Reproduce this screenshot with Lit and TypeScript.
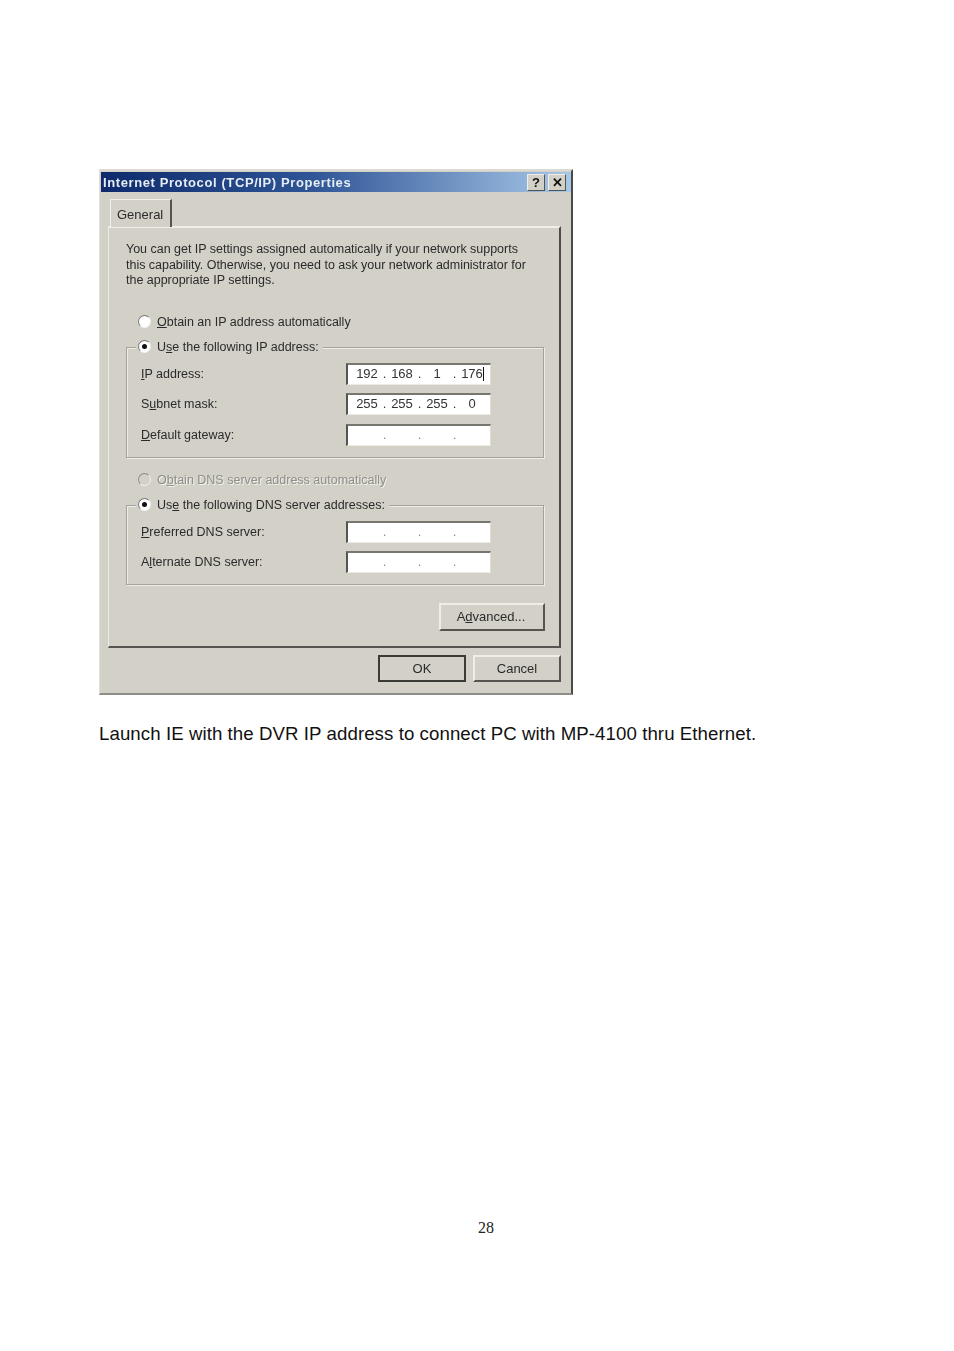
import { LitElement, html, css } from "lit";
import { customElement } from "lit/decorators.js";

const octets = (v: string[]) => html`<div class="ip">
  ${v.map((o, i) => html`<span class="oct">${o}</span>${i < 3 ? html`<span class="dot">.</span>` : ""}`)}
</div>`;

@customElement("app-root")
export class AppRoot extends LitElement {
  static styles = css`
    :host { display: block; width: 954px; height: 1351px; background: #fff; overflow: hidden; }
    .page { padding: 169px 0 0 99px; box-sizing: border-box; height: 1351px; display: flex; flex-direction: column; }
    .dialog { width: 474px; height: 526px; box-sizing: border-box; background: #d3d0c7;
      border-left: 1px solid #e2e0d9; border-top: 2px solid #dcdad2; border-right: 2px solid #4a4a46; border-bottom: 2px solid #8f8e88;
      font: 12.5px "Liberation Sans", Arial, sans-serif; color: #2b2b2b; filter: blur(0.7px); flex: none; }
    .title { height: 20px; margin: 1px 0 0 1px; display: flex; align-items: center; justify-content: space-between;
      background: linear-gradient(90deg, #0e2a6c 0%, #2f5596 45%, #a8c8e8 100%); padding: 0 5px 0 2px; }
    .title b { color: #e6edf4; font-size: 13px; letter-spacing: 0.6px; padding-top: 1px; }
    .winbtns { display: flex; gap: 3px; }
    .winbtn { width: 18px; height: 17px; box-sizing: border-box; background: #d3d0c7; border: 1px solid; border-color: #f0eee8 #55544f #55544f #f0eee8;
      display: flex; align-items: center; justify-content: center; font-weight: bold; font-size: 13px; color: #111; }
    .tabs { height: 27px; margin: 7px 0 0 10px; display: flex; }
    .tab { width: 62px; height: 28px; box-sizing: border-box; border-left: 1px solid #f2f0ea; border-top: 1px solid #f2f0ea; border-right: 2px solid #55544f;
      display: flex; align-items: center; padding: 1px 0 0 6px; font-size: 13px; position: relative; z-index: 1; background: #d3d0c7; }
    .panel { margin-left: 8px; width: 453px; height: 422px; box-sizing: border-box; padding: 14px 17px 0 17px;
      border-top: 2px solid #f0eee6; border-left: 1px solid #ecebe4; border-right: 2px solid #4d4c48; border-bottom: 2px solid #55544f; }
    .para { line-height: 15.5px; margin: 0 0 25px; letter-spacing: -0.02px; }
    .radio-row { display: flex; align-items: center; gap: 6px; height: 16px; padding-left: 12px; white-space: nowrap; }
    .radio { width: 13px; height: 13px; box-sizing: border-box; border-radius: 50%; flex: none; display: flex; align-items: center; justify-content: center;
      border: 1.5px solid; border-color: #777 #eee #f4f4f0 #777; background: #fff; }
    .radio.on::after { content: ""; width: 5px; height: 5px; border-radius: 50%; background: #111; }
    .radio.off { background: #d3d0c7; border-color: #8d8c87 #eee #f4f4f0 #8d8c87; }
    .disabled { color: #8f8e89; text-shadow: 1px 1px 0 #f2f1ec; }
    .first { margin-bottom: 17px; }
    .mid { margin: 14px 0 17px; }
    .group { position: relative; box-sizing: border-box; width: 418px; border: 1px solid #a3a29c; box-shadow: 1px 1px 0 #eeece5, inset 1px 1px 0 #eeece5;
      display: grid; grid-template-columns: 205px 145px; grid-auto-rows: 22px; padding-left: 14px; align-items: center; }
    .g1 { height: 111px; padding-top: 15px; align-content: start; gap: 8.5px 0; }
    .g2 { height: 80px; padding-top: 15px; align-content: start; gap: 8px 0; }
    .legend { position: absolute; top: -9px; left: 9px; background: #d3d0c7; padding-left: 2px; padding-right: 4px; }
    .field { height: 22px; box-sizing: border-box; background: #fff; border-left: 2px solid #55544f; border-top: 2px solid #77766f; border-right: 1px solid #dedcd5; border-bottom: 1px solid #eceae3;
      display: flex; align-items: center; }
    .ip { display: flex; padding: 0 0 2px 7px; font-size: 13px; color: #333; }
    .oct { width: 24px; text-align: center; position: relative; }
    .dot { width: 11px; text-align: center; }
    .empty .dot { color: #8a8a8a; }
    .caret { position: absolute; right: 0; top: 1px; width: 1px; height: 14px; background: #111; }
    .btn { box-sizing: border-box; background: #d3d0c7; display: flex; align-items: center; justify-content: center; font-size: 13px;
      border: 2px solid; border-color: #efede6 #55544f #55544f #efede6; }
    .adv { width: 106px; height: 28px; margin: 18px -3px 0 auto; padding-right: 2px; }
    .foot { display: flex; justify-content: flex-end; gap: 7px; padding: 7px 10px 0 0; }
    .foot .btn { width: 88px; height: 27px; }
    .foot .def { border-color: #3a3a37; }
    .caption { margin: 27px 0 0; font: 18.67px/24px "Liberation Sans", Arial, sans-serif; letter-spacing: 0.07px; color: #111; white-space: nowrap; }
    .pageno { margin: 472px 0 0 379px; font: 16px/20px "Liberation Serif", "Times New Roman", serif; color: #222; }
  `;

  render() {
    return html`<div class="page">
      <div class="dialog">
        <div class="title"><b>Internet Protocol (TCP/IP) Properties</b>
          <div class="winbtns"><span class="winbtn">?</span><span class="winbtn">✕</span></div>
        </div>
        <div class="tabs"><div class="tab">General</div></div>
        <div class="panel">
          <p class="para">You can get IP settings assigned automatically if your network supports<br>
          this capability. Otherwise, you need to ask your network administrator for<br>
          the appropriate IP settings.</p>
          <div class="radio-row first"><span class="radio"></span><span><u>O</u>btain an IP address automatically</span></div>
          <div class="group g1">
            <div class="legend radio-row"><span class="radio on"></span><span>U<u>s</u>e the following IP address:</span></div>
            <span><u>I</u>P address:</span>
            <div class="field">
              <div class="ip"><span class="oct">192</span><span class="dot">.</span><span class="oct">168</span><span class="dot">.</span><span class="oct">1</span><span class="dot">.</span><span class="oct">176<i class="caret"></i></span></div>
            </div>
            <span>S<u>u</u>bnet mask:</span>
            <div class="field">${octets(["255", "255", "255", "0"])}</div>
            <span><u>D</u>efault gateway:</span>
            <div class="field empty">${octets(["", "", "", ""])}</div>
          </div>
          <div class="radio-row mid"><span class="radio off"></span><span class="disabled">O<u>b</u>tain DNS server address automatically</span></div>
          <div class="group g2">
            <div class="legend radio-row"><span class="radio on"></span><span>Us<u>e</u> the following DNS server addresses:</span></div>
            <span><u>P</u>referred DNS server:</span>
            <div class="field empty">${octets(["", "", "", ""])}</div>
            <span>A<u>l</u>ternate DNS server:</span>
            <div class="field empty">${octets(["", "", "", ""])}</div>
          </div>
          <div class="btn adv"><span>A<u>d</u>vanced...</span></div>
        </div>
        <div class="foot">
          <div class="btn def">OK</div>
          <div class="btn">Cancel</div>
        </div>
      </div>
      <p class="caption">Launch IE with the DVR IP address to connect PC with MP-4100 thru Ethernet.</p>
      <div class="pageno">28</div>
    </div>`;
  }
}
